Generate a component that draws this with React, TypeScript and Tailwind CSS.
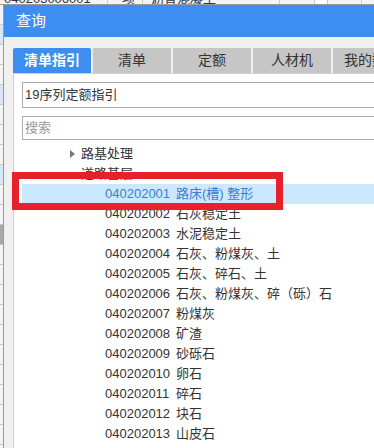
import React from "react";

const font = { fontFamily: '"Liberation Sans", "Noto Sans CJK SC", sans-serif' };

const items: [string, string][] = [
  ["040202002", "石灰稳定土"],
  ["040202003", "水泥稳定土"],
  ["040202004", "石灰、粉煤灰、土"],
  ["040202005", "石灰、碎石、土"],
  ["040202006", "石灰、粉煤灰、碎（砾）石"],
  ["040202007", "粉煤灰"],
  ["040202008", "矿渣"],
  ["040202009", "砂砾石"],
  ["040202010", "卵石"],
  ["040202011", "碎石"],
  ["040202012", "块石"],
  ["040202013", "山皮石"],
];

const tabs = ["清单", "定额", "人材机", "我的数据"];

export default function App() {
  return (
    <div className="relative w-[374px] h-[448px] overflow-hidden bg-white text-[#333]" style={font}>
      {/* background spreadsheet strip */}
      <div className="h-[5px] overflow-hidden flex bg-[#f4f4f4] border-b border-[#9a9a9a]">
        <div className="w-[108px] shrink-0 border-r border-[#c8c8c8] text-[13px] leading-[13px] -mt-[8px] pl-[4px]">040203006001</div>
        <div className="w-[35px] shrink-0 border-r border-[#c8c8c8] text-[13px] leading-[13px] -mt-[8px] pl-[14px]">项</div>
        <div className="w-[137px] shrink-0 border-r border-[#c8c8c8] text-[13px] leading-[13px] -mt-[8px] pl-[8px]">沥青混凝土</div>
        <div className="w-[35px] shrink-0 border-r border-[#c8c8c8]" />
        <div className="w-[13px] shrink-0 border-r border-[#c8c8c8] bg-white" />
        <div className="w-[34px] shrink-0 border-r border-[#c8c8c8]" />
      </div>
      <div className="flex h-[443px]">
        {/* left spreadsheet column */}
        <div className="w-[3px] shrink-0 flex flex-col bg-[#f4f4f4]">
          {Array.from({ length: 22 }).map((_, i) => (
            <div
              key={i}
              className={`h-[20px] shrink-0 border-b border-[#c8c8c8] ${i === 1 || i === 4 || i === 8 ? "bg-[#dbe6f4]" : i === 11 ? "bg-[#a8a8a8]" : ""}`}
            />
          ))}
        </div>
        {/* dialog */}
        <div className="flex-1 flex flex-col border-l border-[#9a9a9a] bg-[#f0f0f0]">
          <div className="h-[32px] shrink-0 bg-[#3d8ef0] flex items-center pl-[12px] text-white text-[15px]">查询</div>
          <div className="flex pl-[9px] pt-[11px] gap-[2px] h-[36px] shrink-0">
            <div className="w-[78px] shrink-0 h-[25px] rounded-t-[2px] bg-[#3d8ef0] text-white text-[14px] flex items-center justify-center font-bold">清单指引</div>
            {tabs.map((t) => (
              <div key={t} className="w-[78px] shrink-0 h-[25px] bg-[#c6c6c6] text-[#333] text-[14px] flex items-center justify-center">{t}</div>
            ))}
          </div>
          <div className="flex-1 ml-[9px] mr-[1px] bg-white border border-[#cfcfcf] border-b-0 flex flex-col px-[8px] pt-[8px]">
            <div className="h-[26px] shrink-0 border border-[#ababab] flex items-center justify-between pl-[2px] pr-[6px] text-[13px]">
              <span>19序列定额指引</span>
              <svg width="7" height="4" viewBox="0 0 7 4"><path d="M0 0h7L3.5 4z" fill="#666" /></svg>
            </div>
            <div className="h-[24px] shrink-0 mt-[8px] border border-[#ababab] flex items-center pl-[2px] text-[13px] text-[#999]">搜索</div>
            <div className="flex flex-1 mt-[3px] min-h-0">
              <div className="flex-1 flex flex-col pt-[1px] text-[13px]">
                <div className="h-[20px] flex items-center">
                  <span className="w-[48px] shrink-0" />
                  <svg width="5" height="8" viewBox="0 0 5 8"><path d="M0 0l5 4-5 4z" fill="#777" /></svg>
                  <span className="ml-[6px]">路基处理</span>
                </div>
                <div className="h-[20px] flex items-center">
                  <span className="w-[46px] shrink-0" />
                  <svg width="8" height="5" viewBox="0 0 8 5"><path d="M0 0h8L4 5z" fill="#555" /></svg>
                  <span className="ml-[5px]">道路基层</span>
                </div>
                <div className="h-[20px] flex items-center bg-[#cce8ff] text-[#3a7fd5]">
                  <span className="w-[83px] shrink-0" />
                  <span className="w-[71px] shrink-0">040202001</span>
                  <span>路床(槽) 整形</span>
                </div>
                {items.map(([c, n]) => (
                  <div key={c} className="h-[20px] flex items-center">
                    <span className="w-[83px] shrink-0" />
                    <span className="w-[71px] shrink-0">{c}</span>
                    <span>{n}</span>
                  </div>
                ))}
              </div>
              <div className="w-[15px] shrink-0 bg-[#e9e9e9] flex flex-col items-center">
                <svg className="mt-[3px]" width="9" height="5" viewBox="0 0 9 5"><path d="M0 5L4.5 0 9 5z" fill="#666" /></svg>
                <div className="w-[10px] h-[155px] mt-[62px] rounded-full bg-[#c1c1c1]" />
              </div>
            </div>
          </div>
        </div>
      </div>
      {/* red annotation box */}
      <div className="absolute left-[12px] top-[172px] w-[271px] h-[38px] border-[7px] border-[#e62129]" />
    </div>
  );
}
